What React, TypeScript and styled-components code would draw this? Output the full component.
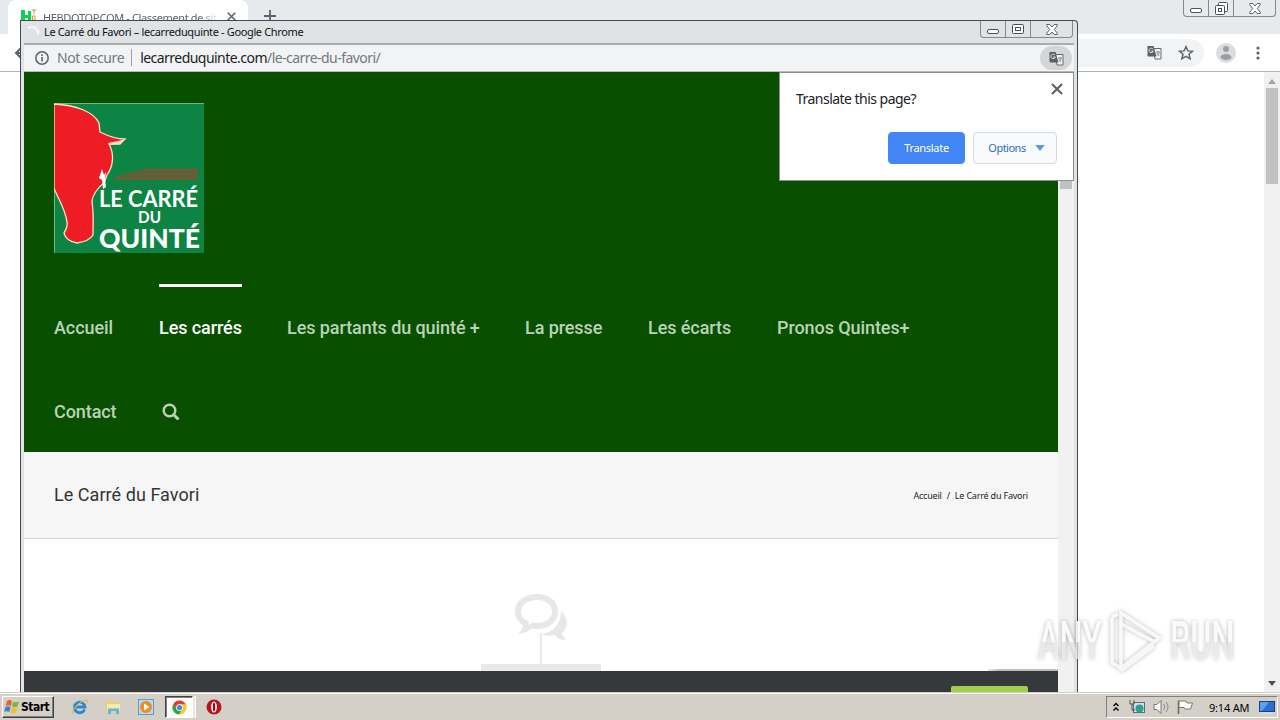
import { Fragment } from "react";
import styled, { createGlobalStyle } from "styled-components";

const GlobalStyle = createGlobalStyle`
  * {
    box-sizing: border-box;
  }

  body {
    margin: 0;
    overflow: hidden;
    font-family: "Noto Sans", "Open Sans", sans-serif;
  }

  svg {
    display: block;
    flex: none;
  }
`;

const Desktop = styled.div`
  position: relative;
  width: 1280px;
  height: 720px;
  overflow: hidden;
  display: flex;
  flex-direction: column;
  background: #fff;
`;

/* main browser window, behind the popup */

const MainWindow = styled.div`
  flex: 1;
  min-height: 0;
  display: flex;
  flex-direction: column;
`;

const TabStrip = styled.div`
  height: 34px;
  display: flex;
  justify-content: space-between;
  background: #e6eaed;
`;

const TabGroup = styled.div`
  display: flex;
  align-items: flex-start;
  padding-left: 8px;
`;

const Tab = styled.div`
  width: 240px;
  height: 34px;
  padding: 9px 10px 0 12px;
  display: flex;
  border-radius: 8px 8px 0 0;
  background: #fff;
`;

const TabTitle = styled.div`
  width: 176px;
  margin: 0 8px 0 7px;
  overflow: hidden;
  white-space: nowrap;
  font-size: 11px;
  line-height: 17px;
  letter-spacing: -0.36px;
  color: #5f6368;
  mask-image: linear-gradient(90deg, #000 88%, transparent);
`;

const TabClose = styled.div`
  padding-top: 3px;
`;

const NewTab = styled.div`
  padding: 10px 0 0 16px;
`;

const MainCaption = styled.div`
  width: 93px;
  height: 17px;
  margin-right: 4px;
  display: flex;
  border: 1px solid #85898e;
  border-top: 0;
  border-radius: 0 0 4px 4px;
`;

const CaptionButton = styled.div<{ $width: number }>`
  width: ${({ $width }) => $width}px;
  display: flex;
  align-items: center;
  justify-content: center;

  & + & {
    border-left: 1px solid #85898e;
  }
`;

const MainToolbar = styled.div`
  height: 38px;
  display: flex;
  align-items: center;
  justify-content: space-between;
  padding: 0 14px;
  background: #fff;
  border-bottom: 1px solid #b0b3b6;
`;

const ToolbarActions = styled.div`
  display: flex;
  align-items: center;
`;

const OmniboxEnd = styled.div`
  width: 160px;
  height: 28px;
  padding-right: 10px;
  display: flex;
  align-items: center;
  justify-content: flex-end;
  gap: 16px;
  border-radius: 0 14px 14px 0;
  background: #f1f3f4;
`;

const Avatar = styled.div`
  margin: 0 14px 0 12px;
`;

const MainPage = styled.div`
  flex: 1;
  display: flex;
  justify-content: flex-end;
`;

const Scrollbar = styled.div`
  width: 16px;
  padding: 7px 0 6px;
  display: flex;
  flex-direction: column;
  align-items: center;
  justify-content: space-between;
  background: #f1f1f1;
`;

const ScrollTop = styled.div`
  display: flex;
  flex-direction: column;
  align-items: center;
  gap: 4px;
`;

const ScrollThumb = styled.div`
  width: 12px;
  height: 96px;
  background: #c1c1c1;
`;

/* popup window */

const Popup = styled.div`
  position: absolute;
  left: 20px;
  top: 20px;
  width: 1058px;
  height: 672px;
  display: flex;
  flex-direction: column;
  padding: 0 3px;
  background: #dfe3e6;
  border: 1px solid #45494d;
  border-bottom: 0;
  border-radius: 0 4px 0 0;
`;

const TitleBar = styled.div`
  height: 22px;
  display: flex;
  justify-content: space-between;
`;

const TitleText = styled.div`
  padding-bottom: 1px;
  display: flex;
  align-items: center;
  gap: 4px;
  font-size: 11px;
  color: #111;
  white-space: nowrap;
  letter-spacing: -0.36px;
`;

const PopupCaption = styled(MainCaption)`
  margin-right: 1px;
`;

const AddressBar = styled.div`
  height: 29px;
  padding: 0 2px 0 10px;
  display: flex;
  align-items: center;
  justify-content: space-between;
  background: #f1f3f4;
  border-top: 2px solid #a9acaf;
  border-bottom: 1px solid #b5b8ba;
`;

const Address = styled.div`
  padding-bottom: 1px;
  display: flex;
  align-items: center;
  font-size: 14px;
  color: #74777b;
  white-space: nowrap;
`;

const NotSecure = styled.span`
  margin-left: 7px;
  padding-right: 7px;
  line-height: 17px;
  letter-spacing: -0.4px;
  border-right: 1px solid #9b9ea2;
`;

const Url = styled.span`
  margin-left: 8px;
  letter-spacing: -0.54px;
`;

const Host = styled.span`
  color: #1b1c1e;
`;

const TranslateBadge = styled.div`
  width: 32px;
  height: 24px;
  display: flex;
  align-items: center;
  justify-content: center;
  border-radius: 12px;
  background: #d3d5d7;
`;

const Viewport = styled.div`
  flex: 1;
  min-height: 0;
  display: flex;
  background: #fff;
`;

const Site = styled.div`
  width: 1034px;
  display: flex;
  flex-direction: column;
`;

const PopupScroll = styled.div`
  width: 16px;
  padding: 21px 2px 0;
  background: #f1f1f1;
`;

const PopupThumb = styled.div`
  height: 96px;
  background: #c1c1c1;
`;

/* website */

const SiteHeader = styled.header`
  height: 380px;
  padding: 31px 30px 0;
  background: #085000;
`;

const Nav = styled.nav`
  width: 900px;
  margin-top: 31px;
  display: flex;
  flex-wrap: wrap;
  column-gap: 45px;
`;

const NavItem = styled.a<{ $active?: boolean; $width: number }>`
  width: ${({ $width }) => $width}px;
  height: 84px;
  display: flex;
  align-items: center;
  padding-bottom: 1px;
  font-family: Roboto, sans-serif;
  font-size: 18px;
  font-weight: 500;
  letter-spacing: -0.08px;
  white-space: nowrap;
  color: ${({ $active }) => ($active ? "#fff" : "#b9d3b7")};
  border-top: 3px solid ${({ $active }) => ($active ? "#fff" : "transparent")};
`;

const PageTitleBar = styled.div`
  height: 87px;
  padding: 0 30px;
  display: flex;
  align-items: center;
  justify-content: space-between;
  background: #f6f6f6;
  border-bottom: 1px solid #d2d3d4;
`;

const PageTitle = styled.h1`
  margin: 0 0 2px;
  font-family: Roboto, sans-serif;
  font-size: 18px;
  font-weight: 400;
  letter-spacing: 0.05px;
  color: #333;
`;

const Breadcrumb = styled.div`
  display: flex;
  gap: 5px;
  font-size: 9px;
  color: #222;
  letter-spacing: -0.2px;
`;

const Content = styled.main`
  flex: 1;
  min-height: 0;
  display: flex;
  flex-direction: column;
  align-items: center;
  justify-content: flex-end;
`;

const Stem = styled.div`
  width: 2px;
  height: 31px;
  margin-top: -8px;
  background: #e8e8e8;
`;

const Block = styled.div`
  width: 120px;
  height: 7px;
  background: #e9e9e9;
`;

const ToTop = styled.div`
  position: absolute;
  right: 19px;
  top: 648px;
  width: 70px;
  height: 2px;
  background: linear-gradient(90deg, #e6e6e6, #bdbdbd 15%);
`;

const FooterBar = styled.div`
  height: 21px;
  padding: 15px 30px 0;
  display: flex;
  justify-content: flex-end;
  background: #36393c;
`;

const CookieButton = styled.div`
  width: 77px;
  height: 6px;
  border-radius: 2px 2px 0 0;
  background: #a0ce4e;
`;

/* translate bubble */

const Bubble = styled.div`
  position: absolute;
  left: 779px;
  top: 72px;
  width: 295px;
  height: 109px;
  padding: 8px 16px 16px;
  display: flex;
  flex-direction: column;
  justify-content: space-between;
  background: #fff;
  border: 1px solid #8b8e91;
`;

const BubbleTop = styled.div`
  display: flex;
  justify-content: space-between;
  font-size: 14px;
  letter-spacing: -0.53px;
  color: #202124;
`;

const BubbleText = styled.div`
  padding-top: 8px;
`;

const BubbleClose = styled.div`
  margin: 2px -6px 0 0;
`;

const BubbleButtons = styled.div`
  display: flex;
  justify-content: flex-end;
  gap: 8px;
`;

const BubbleButton = styled.button<{ $primary?: boolean }>`
  width: ${({ $primary }) => ($primary ? 77 : 84)}px;
  height: 32px;
  padding: ${({ $primary }) => ($primary ? "0 0 1px" : "0 0 1px 3px")};
  display: flex;
  align-items: center;
  justify-content: center;
  gap: 9px;
  font-family: inherit;
  font-size: 11px;
  letter-spacing: ${({ $primary }) => ($primary ? -0.3 : -0.5)}px;
  color: ${({ $primary }) => ($primary ? "#fff" : "#2f6cc0")};
  background: ${({ $primary }) => ($primary ? "#4285f4" : "#f9fafb")};
  border: 1px solid ${({ $primary }) => ($primary ? "#4285f4" : "#d5d8de")};
  border-radius: 4px;
`;

/* watermark */

const Watermark = styled.div`
  position: absolute;
  left: 1038px;
  top: 608px;
  width: 196px;
  height: 66px;
  display: flex;
  align-items: center;
  justify-content: space-between;
  filter: drop-shadow(0 0 2px rgba(0, 0, 0, 0.32));
`;

const BrandText = styled.div`
  width: 64px;
  display: flex;
`;

const Brand = styled.span`
  flex: none;
  font-family: Roboto, sans-serif;
  font-size: 53px;
  font-weight: 500;
  line-height: 68px;
  color: transparent;
  background: linear-gradient(rgba(255, 255, 255, 0.9) 52%, rgba(240, 240, 240, 0.7) 52%);
  background-clip: text;
  transform: scaleX(0.61);
  transform-origin: 0 50%;
`;

/* taskbar */

const Taskbar = styled.div`
  position: relative;
  height: 28px;
  padding: 2px 2px 1px;
  display: flex;
  align-items: center;
  justify-content: space-between;
  background: #d4d0c8;
  border-top: 1px solid #d4d0c8;
  box-shadow: inset 0 1px 0 #fff;
`;

const TaskGroup = styled.div`
  display: flex;
  align-items: center;
`;

const StartButton = styled.div`
  width: 52px;
  height: 22px;
  padding-left: 1px;
  display: flex;
  align-items: center;
  gap: 1px;
  font-family: "DejaVu Sans Condensed", "DejaVu Sans", sans-serif;
  font-size: 12px;
  font-weight: 700;
  letter-spacing: -0.5px;
  color: #000;
  border: 1px solid;
  border-color: #fff #404040 #404040 #fff;
  box-shadow: inset -1px -1px 0 #808080;
`;

const QuickLaunch = styled.div`
  margin-left: 18px;
  display: flex;
  align-items: center;
  gap: 17px;
`;

const ActiveTask = styled.div`
  width: 28px;
  height: 22px;
  margin-left: 11px;
  display: flex;
  align-items: center;
  justify-content: center;
  background: #fff;
  border: 1px solid;
  border-color: #404040 #fff #fff #404040;
  box-shadow: inset 1px 1px 0 #808080;
`;

const TaskSplit = styled.div`
  width: 3px;
  height: 22px;
  margin: 0 10px 0 0;
  background: #e9e6e1;
  border-right: 1px solid #fff;
`;

const Tray = styled.div`
  height: 22px;
  width: 172px;
  padding: 0 2px 0 6px;
  display: flex;
  align-items: center;
  border: 1px solid;
  border-color: #808080 #fff #fff #808080;
`;

const Clock = styled.span`
  margin: 0 10px 0 15px;
  font-size: 11px;
  letter-spacing: -0.2px;
  white-space: nowrap;
  color: #000;
`;

const TrayIcon = styled.div<{ $gap: number }>`
  margin-left: ${({ $gap }) => $gap}px;
`;

const navItems = [
  { label: "Accueil", width: 60 },
  { label: "Les carrés", width: 83, active: true },
  { label: "Les partants du quinté +", width: 193 },
  { label: "La presse", width: 78 },
  { label: "Les écarts", width: 84 },
  { label: "Pronos Quintes+", width: 134 },
  { label: "Contact", width: 63 },
];

const crumbs = ["Accueil", "Le Carré du Favori"];

function MinimizeIcon() {
  return (
    <svg width="12" height="12" viewBox="0 0 12 12">
      <rect x="0.5" y="6.5" width="11" height="4" rx="1.5" fill="#fff" stroke="#4d5157" />
    </svg>
  );
}

function MaximizeIcon() {
  return (
    <svg width="12" height="10" viewBox="0 0 12 10">
      <rect x="0.5" y="0.5" width="11" height="9" rx="1" fill="#fff" stroke="#4d5157" />
      <rect x="3.5" y="3.5" width="5" height="3" fill="none" stroke="#4d5157" />
    </svg>
  );
}

function RestoreIcon() {
  return (
    <svg width="13" height="13" viewBox="0 0 13 13">
      <rect x="3.5" y="0.5" width="9" height="9" rx="1" fill="#fff" stroke="#4d5157" />
      <rect x="0.5" y="3.5" width="9" height="9" rx="1" fill="#fff" stroke="#4d5157" />
      <rect x="3.5" y="6.5" width="3" height="3" fill="none" stroke="#4d5157" />
    </svg>
  );
}

function CaptionCloseIcon() {
  return (
    <svg width="12" height="11" viewBox="0 0 12 11">
      <path
        d="M.8.5h3L6 3 8.200.5h3v1.200L8.300 5.500l2.900 3.600v1.400h-3L6 8l-2.200 2.500h-3V9.100L3.700 5.500.8 1.700z"
        fill="#fff"
        stroke="#4d5157"
        strokeWidth="0.9"
      />
    </svg>
  );
}

function CloseIcon({ size, color = "#5f6368" }: { size: number; color?: string }) {
  return (
    <svg width={size} height={size} viewBox="0 0 10 10">
      <path d="M.8.8l8.400 8.400M9.200.8L.8 9.200" stroke={color} strokeWidth="1.8" />
    </svg>
  );
}

function TranslateIcon() {
  return (
    <svg width="15" height="15" viewBox="0 0 15 15">
      <path d="M6 3.500h8v10.500H8z" fill="#f4f4f4" stroke="#666a6e" />
      <path d="M.5 1h6l3 10.500H1.500a1 1 0 0 1-1-1z" fill="#5c6064" />
      <path d="M6 4.200A2.200 2.200 0 1 0 6.300 6H4.300" fill="none" stroke="#e8e8e8" strokeWidth="1" />
      <path d="M9 7h4M11 6v1M12.300 7c-.3 1.600-1.300 2.800-2.500 3.500M9.800 8l2.500 3" stroke="#777" strokeWidth=".8" fill="none" />
    </svg>
  );
}

function Triangle({ up, color, width = 8 }: { up?: boolean; color: string; width?: number }) {
  return (
    <svg width={width} height={width / 2 + 1} viewBox="0 0 8 5">
      <path d={up ? "M0 5l4-5 4 5z" : "M0 0l4 5 4-5z"} fill={color} />
    </svg>
  );
}

function SiteLogo() {
  return (
    <svg width="150" height="150" viewBox="0 0 150 150">
      <rect width="150" height="150" fill="#0d8443" />
      <path d="M.5 150V.5H150" fill="none" stroke="#6db58a" />
      <path
        d="M0 1C22 2 40 9 45 20L46 29C54 33 62 36 71 36L66 41H55C60 50 60 62 53 72L50 80C44 84 38 93 38 99C40 112 39 120 39 132C36 137 30 139 23 140C16 139 11 135 10 130C12 126 14 124 13 119C11 105 4 96 0 85z"
        fill="#ee1c25"
        stroke="#f5e6c0"
        strokeWidth="1.300"
      />
      <path d="M45 75l3-9 2 6 2-3-1 7 1 8-3 2-1-9z" fill="#fff" />
      <path d="M54 40l10-2 8-2-7 5-9 1z" fill="#f6dfc5" />
      <path d="M90 65.500h54V77H58l10-6z" fill="#4c6a38" />
      <path d="M90 67h54M76 71h68M62 75h82" stroke="#8a5034" strokeWidth="1.600" />
      <g fill="#fff" fontFamily="Lato, sans-serif" fontWeight="700">
        <text x="45" y="103.500" fontSize="22" textLength="99" lengthAdjust="spacingAndGlyphs">LE CARRÉ</text>
        <text x="84" y="119.500" fontSize="17" textLength="23" lengthAdjust="spacingAndGlyphs">DU</text>
        <text x="45" y="144.500" fontSize="27" fontWeight="900" textLength="101" lengthAdjust="spacingAndGlyphs">QUINTÉ</text>
      </g>
    </svg>
  );
}

function CommentsIcon() {
  return (
    <svg width="52" height="47" viewBox="0 0 52 47">
      <path d="M46 17c8 7 7 17 1 22 0 2 2 5 4 7-5 0-9-2-11-5-4 1-9 1-13-1 11-2 19-9 19-23z" fill="#e7e7e7" />
      <path
        d="M22 0C34 0 43 7 43 17.500S34 35 22 35c-2 0-4 0-5-.5-4 3-9 5-14 5 3-2 5-5 5-8C3 28 0 23 0 17.500 0 7 10 0 22 0zm0 6C13 6 6 11 6 17.500c0 5 3 8 8 10l-1 4 4-3c2 .5 3 .5 5 .5 9 0 15-5 15-11.500S31 6 22 6z"
        fill="#e7e7e7"
      />
    </svg>
  );
}

function WindowsLogo() {
  return (
    <svg width="16" height="16" viewBox="0 0 16 16">
      <path d="M3 2c2-1.500 3.500-1 5 0L6.800 7C5 6 3.500 6 1.700 7z" fill="#e8622c" />
      <path d="M9 2.500c2 1 3.500 1 6 0l-1.500 5c-2 1-3.700.8-5.500 0z" fill="#7db83a" />
      <path d="M1.500 8c1.800-1 3.300-1 5 0l-1.200 5C3.500 12 2 12 .2 13z" fill="#3c80d0" />
      <path d="M7.600 8.500c2 1 3.500 1 5.600 0l-1.400 5c-2 1-3.700.8-5.400 0z" fill="#f5bf2b" />
    </svg>
  );
}

function ExplorerIcon() {
  return (
    <svg width="16" height="16" viewBox="0 0 16 16">
      <path d="M12.600 10.500A5.300 5.300 0 1 1 13 8H4" fill="none" stroke="#2a86d8" strokeWidth="2.800" />
      <path d="M1 14.500C-1 11 8 2 14 1c2 0 1.500 2 .8 3" fill="none" stroke="#e9b93a" strokeWidth="1.200" />
    </svg>
  );
}

function FolderIcon() {
  return (
    <svg width="16" height="16" viewBox="0 0 16 16">
      <path d="M1 2h5l1 1.500h7V13H1z" fill="#e9cf6e" />
      <path d="M2 5h13v7H2z" fill="#f8e9a4" />
      <path d="M3 15V9.500h11V15h-3v-3H6v3z" fill="#62b4e5" />
    </svg>
  );
}

function MediaIcon() {
  return (
    <svg width="16" height="16" viewBox="0 0 16 16">
      <rect x="0.500" y="0.500" width="15" height="15" fill="#b9d8f2" stroke="#5b9bd5" />
      <circle cx="8" cy="8" r="6" fill="#f28a1c" />
      <path d="M6 4.500v7L11.500 8z" fill="#fff" />
    </svg>
  );
}

function ChromeIcon() {
  return (
    <svg width="15" height="15" viewBox="0 0 16 16">
      <circle cx="8" cy="8" r="7.500" fill="#f7c92f" />
      <path d="M1.500 4.200A7.500 7.500 0 0 1 14.600 4.500H8L5 9.500z" fill="#df4033" />
      <path d="M1.500 4.200A7.500 7.500 0 0 0 7.500 15.500L10.500 10 5 9.500z" fill="#2da44e" />
      <circle cx="8" cy="8" r="3.600" fill="#fff" />
      <circle cx="8" cy="8" r="2.800" fill="#4a86e0" />
    </svg>
  );
}

function OperaIcon() {
  return (
    <svg width="16" height="16" viewBox="0 0 16 16">
      <circle cx="8" cy="8" r="7.500" fill="#b9141b" />
      <ellipse cx="8" cy="8" rx="2.900" ry="5.500" fill="#fff" />
      <ellipse cx="8" cy="8" rx="1.200" ry="4.500" fill="#8d1015" />
    </svg>
  );
}

export default function App() {
  return (
    <>
      <GlobalStyle />
      <Desktop>
        <MainWindow>
          <TabStrip>
            <TabGroup>
              <Tab>
                <svg width="16" height="16" viewBox="0 0 16 16">
                  <path d="M1 1h4v5h3V2h3v11H8V9H5v5H1z" fill="#10d050" />
                  <path d="M12 1h4M14 1v4M12.500 7h2.500v4h-2.500z" stroke="#c9963b" fill="none" />
                </svg>
                <TabTitle>HEBDOTOP.COM - Classement de sit</TabTitle>
                <TabClose>
                  <CloseIcon size={9} />
                </TabClose>
              </Tab>
              <NewTab>
                <svg width="12" height="12" viewBox="0 0 12 12">
                  <path d="M6 0v12M0 6h12" stroke="#5f6368" strokeWidth="1.800" />
                </svg>
              </NewTab>
            </TabGroup>
            <MainCaption>
              <CaptionButton $width={24}>
                <MinimizeIcon />
              </CaptionButton>
              <CaptionButton $width={25}>
                <RestoreIcon />
              </CaptionButton>
              <CaptionButton $width={42}>
                <CaptionCloseIcon />
              </CaptionButton>
            </MainCaption>
          </TabStrip>
          <MainToolbar>
            <svg width="14" height="14" viewBox="0 0 14 14">
              <path d="M8 1L2 7l6 6M2 7h12" fill="none" stroke="#5f6368" strokeWidth="2" />
            </svg>
            <ToolbarActions>
              <OmniboxEnd>
                <TranslateIcon />
                <svg width="16" height="16" viewBox="0 0 16 16">
                  <path
                    d="M8 1.700l1.900 4.200 4.600.4-3.500 3 1.100 4.500L8 11.400l-4.100 2.400L5 9.300l-3.500-3 4.600-.4z"
                    fill="none"
                    stroke="#5f6368"
                    strokeWidth="1.500"
                  />
                </svg>
              </OmniboxEnd>
              <Avatar>
                <svg width="20" height="20" viewBox="0 0 20 20">
                  <circle cx="10" cy="10" r="10" fill="#dadcdf" />
                  <circle cx="10" cy="6" r="3" fill="#9a9da1" />
                  <ellipse cx="10" cy="14" rx="5.500" ry="3" fill="#9a9da1" />
                </svg>
              </Avatar>
              <svg width="16" height="16" viewBox="0 0 16 16" fill="#5f6368">
                <circle cx="8" cy="3" r="1.600" />
                <circle cx="8" cy="8" r="1.600" />
                <circle cx="8" cy="13" r="1.600" />
              </svg>
            </ToolbarActions>
          </MainToolbar>
          <MainPage>
            <Scrollbar>
              <ScrollTop>
                <Triangle up color="#a3a3a3" />
                <ScrollThumb />
              </ScrollTop>
              <Triangle color="#505050" />
            </Scrollbar>
          </MainPage>
        </MainWindow>

        <Popup>
          <TitleBar>
            <TitleText>
              <svg width="16" height="16" viewBox="0 0 16 16">
                <path d="M4 4.500A6 6 0 0 1 14 10" fill="none" stroke="#f7f9fa" strokeWidth="2.200" />
              </svg>
              Le Carré du Favori – lecarreduquinte - Google Chrome
            </TitleText>
            <PopupCaption>
              <CaptionButton $width={24}>
                <MinimizeIcon />
              </CaptionButton>
              <CaptionButton $width={25}>
                <MaximizeIcon />
              </CaptionButton>
              <CaptionButton $width={42}>
                <CaptionCloseIcon />
              </CaptionButton>
            </PopupCaption>
          </TitleBar>
          <AddressBar>
            <Address>
              <svg width="16" height="16" viewBox="0 0 16 16">
                <circle cx="8" cy="8" r="6.200" fill="none" stroke="#5f6368" strokeWidth="1.500" />
                <path d="M8 7v4.500M8 4.300v1.600" stroke="#5f6368" strokeWidth="1.600" />
              </svg>
              <NotSecure>Not secure</NotSecure>
              <Url>
                <Host>lecarreduquinte.com</Host>/le-carre-du-favori/
              </Url>
            </Address>
            <TranslateBadge>
              <TranslateIcon />
            </TranslateBadge>
          </AddressBar>
          <Viewport>
            <Site>
              <SiteHeader>
                <SiteLogo />
                <Nav>
                  {navItems.map((item) => (
                    <NavItem key={item.label} $width={item.width} $active={item.active}>
                      {item.label}
                    </NavItem>
                  ))}
                  <NavItem $width={18}>
                    <svg width="18" height="18" viewBox="0 0 18 18">
                      <circle cx="7.500" cy="8.500" r="5.800" fill="none" stroke="#b9d3b7" strokeWidth="2.400" />
                      <path d="M11.500 12.500l5 5" stroke="#b9d3b7" strokeWidth="3" />
                    </svg>
                  </NavItem>
                </Nav>
              </SiteHeader>
              <PageTitleBar>
                <PageTitle>Le Carré du Favori</PageTitle>
                <Breadcrumb>
                  {crumbs.map((crumb, index) => (
                    <Fragment key={crumb}>
                      {index > 0 && <span>/</span>}
                      <span>{crumb}</span>
                    </Fragment>
                  ))}
                </Breadcrumb>
              </PageTitleBar>
              <Content>
                <CommentsIcon />
                <Stem />
                <Block />
              </Content>
              <FooterBar>
                <CookieButton />
              </FooterBar>
            </Site>
            <PopupScroll>
              <PopupThumb />
            </PopupScroll>
          </Viewport>
          <ToTop />
        </Popup>

        <Bubble>
          <BubbleTop>
            <BubbleText>Translate this page?</BubbleText>
            <BubbleClose>
              <CloseIcon size={12} />
            </BubbleClose>
          </BubbleTop>
          <BubbleButtons>
            <BubbleButton $primary>Translate</BubbleButton>
            <BubbleButton>
              Options
              <Triangle color="#5b9bdc" width={10} />
            </BubbleButton>
          </BubbleButtons>
        </Bubble>

        <Taskbar>
          <TaskGroup>
            <StartButton>
              <WindowsLogo />
              Start
            </StartButton>
            <QuickLaunch>
              <ExplorerIcon />
              <FolderIcon />
              <MediaIcon />
            </QuickLaunch>
            <ActiveTask>
              <ChromeIcon />
            </ActiveTask>
            <TaskSplit />
            <OperaIcon />
          </TaskGroup>
          <Tray>
            <svg width="6" height="10" viewBox="0 0 6 10">
              <path d="M.5 4L3 1.500 5.500 4M.5 8.500L3 6l2.500 2.500" fill="none" stroke="#000" strokeWidth="1.300" />
            </svg>
            <TrayIcon $gap={10}>
              <svg width="16" height="16" viewBox="0 0 16 16">
                <rect x="4.500" y="3.500" width="11" height="10" fill="#cfe0e6" stroke="#55707a" />
                <circle cx="10.500" cy="9.500" r="4" fill="#2f9f94" />
                <path d="M1 1v4h4V1M3 5v6h3" fill="none" stroke="#555" />
              </svg>
            </TrayIcon>
            <TrayIcon $gap={8}>
              <svg width="17" height="16" viewBox="0 0 17 16">
                <path d="M1 5.500h3l4-4v13l-4-4H1z" fill="#fff" stroke="#777" />
                <path d="M10.500 5c1.500 2 1.500 4 0 6M13 3c2.500 3 2.500 7 0 10" fill="none" stroke="#888" />
              </svg>
            </TrayIcon>
            <TrayIcon $gap={7}>
              <svg width="17" height="16" viewBox="0 0 17 16">
                <path d="M1.500 15V1.500" stroke="#666" strokeWidth="1.500" />
                <path d="M2 2h7l1 2h5.500l-2 6H8L7 8.500H2z" fill="#fff" stroke="#777" />
              </svg>
            </TrayIcon>
            <Clock>9:14 AM</Clock>
            <svg width="16" height="14" viewBox="0 0 16 14">
              <rect x="0.500" y="1.500" width="15" height="10" fill="#2b6fd0" stroke="#1d3f7c" />
              <path d="M1 2h9L3 11H1z" fill="#5da0ee" />
              <path d="M2 13h12" stroke="#ddd" strokeWidth="1.500" />
            </svg>
          </Tray>
        </Taskbar>

        <Watermark>
          <BrandText>
            <Brand>ANY</Brand>
          </BrandText>
          <svg width="60" height="66" viewBox="0 0 60 66">
            <path
              d="M15 5v55l38-30zM6 9v46l6 3M12 6L6 9M15 16l32 17M12 58l4 4 32-24"
              fill="none"
              stroke="#fff"
              strokeOpacity=".85"
              strokeWidth="3.500"
            />
          </svg>
          <BrandText>
            <Brand>RUN</Brand>
          </BrandText>
        </Watermark>
      </Desktop>
    </>
  );
}
